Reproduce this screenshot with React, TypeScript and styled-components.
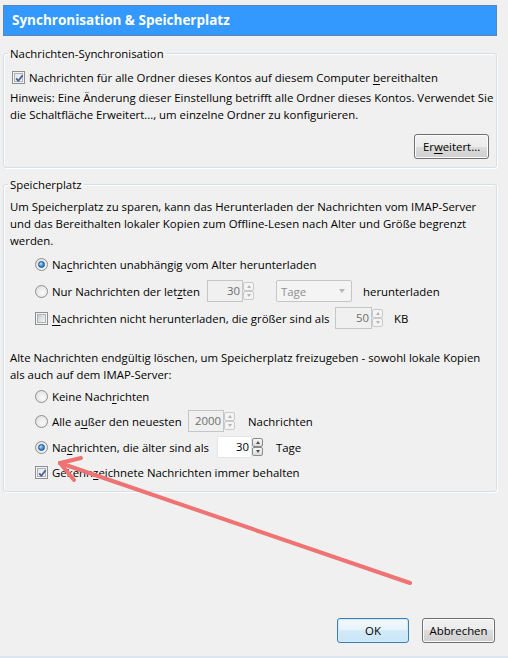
import styled, { createGlobalStyle } from "styled-components";

const GlobalStyle = createGlobalStyle`
  html, body {
    margin: 0;
    padding: 0;
    background: #f0f0f0;
  }
  body {
    font-family: "Open Sans", "Noto Sans", sans-serif;
    font-size: 11.4px;
    color: #000;
  }
`;

const Window = styled.div`
  position: relative;
  width: 508px;
  height: 658px;
  box-sizing: border-box;
  padding: 5px 11px 0 3px;
  border-bottom: 2px solid #dce6f1;
  display: flex;
  flex-direction: column;
`;

const TitleBar = styled.div`
  height: 31px;
  box-sizing: border-box;
  background: #3399ff;
  border: 1px solid #5b86b3;
  color: #fff;
  font-weight: 700;
  font-size: 13.5px;
  line-height: 29px;
  padding-left: 8px;
`;

const Group = styled.fieldset<{ $gap: number }>`
  margin: ${(p) => p.$gap}px 0 0;
  padding: 0 7px 8px 6px;
  border: 1px solid #d5dfe5;
  border-radius: 3px;
  box-shadow: inset 1px 1px 0 #fff, 1px 1px 0 #fff;
  min-width: 0;
`;

const Legend = styled.legend`
  padding: 0 2px;
  margin-left: -2px;
  line-height: 17px;
`;

const Row = styled.div<{ $top: number; $indent?: number }>`
  display: flex;
  align-items: center;
  height: 22px;
  margin-top: ${(p) => p.$top}px;
  padding-left: ${(p) => p.$indent ?? 0}px;
  white-space: nowrap;
`;

const Para = styled.p<{ $top: number }>`
  margin: ${(p) => p.$top}px 0 0;
  line-height: 17px;
  white-space: nowrap;
`;

const Option = styled.label<{ $w?: number }>`
  display: flex;
  align-items: center;
  gap: 4px;
  width: ${(p) => (p.$w ? `${p.$w}px` : "auto")};
  flex: none;
`;

const CheckBox = styled.span<{ $checked?: boolean }>`
  position: relative;
  width: 13px;
  height: 13px;
  box-sizing: border-box;
  border: 1px solid #8e8f8f;
  background: #f4f4f4;
  flex: none;

  &::before {
    content: "";
    position: absolute;
    inset: 1px;
    border: 1px solid #aeb3b9;
    background: ${(p) =>
      p.$checked
        ? "linear-gradient(135deg, #dfe3ea, #fbfbfb)"
        : "linear-gradient(135deg, #c8ccd1, #f5f5f5)"};
  }

  svg {
    position: absolute;
    left: 1px;
    top: 1px;
  }
`;

const Radio = styled.span<{ $checked?: boolean }>`
  position: relative;
  width: 13px;
  height: 13px;
  box-sizing: border-box;
  border-radius: 50%;
  border: 1px solid #8e8f8f;
  background: radial-gradient(circle at 60% 60%, #fbfbfb 0%, #e4e4e4 70%, #cfcfcf 100%);
  flex: none;

  &::after {
    content: "";
    display: ${(p) => (p.$checked ? "block" : "none")};
    position: absolute;
    left: 2px;
    top: 2px;
    width: 7px;
    height: 7px;
    box-sizing: border-box;
    border-radius: 50%;
    border: 1px solid #1b4f8c;
    background: radial-gradient(circle at 35% 35%, #bfe3ff 0%, #4b9be0 45%, #1f5fa8 100%);
  }
`;

const Key = styled.span`
  text-decoration: underline;
  text-underline-offset: 2px;
`;

const Spin = styled.span<{ $left: number }>`
  display: inline-flex;
  align-items: center;
  margin-left: ${(p) => p.$left}px;
  flex: none;
`;

const NumBox = styled.span<{ $disabled?: boolean; $w: number }>`
  width: ${(p) => p.$w}px;
  height: 22px;
  box-sizing: border-box;
  border: 1px solid ${(p) => (p.$disabled ? "#c4c7ca" : "#e2e6eb")};
  background: ${(p) => (p.$disabled ? "#f0f0f0" : "#fff")};
  color: ${(p) => (p.$disabled ? "#6d6d6d" : "#000")};
  text-align: right;
  padding-right: 2px;
  line-height: 20px;
`;

const SpinButtons = styled.span`
  display: flex;
  flex-direction: column;
  width: 11px;
  height: 18px;
`;

const SpinButton = styled.span<{ $disabled?: boolean; $down?: boolean }>`
  flex: 1;
  box-sizing: border-box;
  border: 1px solid ${(p) => (p.$disabled ? "#c9c9c9" : "#8a8a8a")};
  border-radius: 2px;
  background: ${(p) =>
    p.$disabled ? "#f4f4f4" : "linear-gradient(#f6f6f6, #dcdcdc)"};
  display: flex;
  align-items: center;
  justify-content: center;

  &::after {
    content: "";
    border-left: 2.5px solid transparent;
    border-right: 2.5px solid transparent;
    ${(p) => (p.$down ? "border-top" : "border-bottom")}: 3px solid
      ${(p) => (p.$disabled ? "#b4b4b4" : "#4d4d4d")};
  }
`;

const Select = styled.span<{ $left: number }>`
  width: 76px;
  height: 22px;
  box-sizing: border-box;
  margin-left: ${(p) => p.$left}px;
  border: 1px solid #c6c6c6;
  border-radius: 2px;
  background: #f4f4f4;
  color: #8d8d8d;
  display: flex;
  align-items: center;
  justify-content: space-between;
  padding: 0 6px 0 4px;
  flex: none;

  &::after {
    content: "";
    border-left: 3.5px solid transparent;
    border-right: 3.5px solid transparent;
    border-top: 4px solid #b8b8b8;
  }
`;

const After = styled.span<{ $left: number }>`
  margin-left: ${(p) => p.$left}px;
`;

const ButtonRow = styled.div<{ $top?: number }>`
  display: flex;
  justify-content: flex-end;
  gap: 13px;
  margin-top: ${(p) => (p.$top != null ? `${p.$top}px` : "auto")};
`;

const Button = styled.button<{ $w: number; $default?: boolean }>`
  width: ${(p) => p.$w}px;
  height: 25px;
  padding: 0;
  font: inherit;
  color: #000;
  border-radius: 3px;
  border: 1px solid ${(p) => (p.$default ? "#3c7fb1" : "#707070")};
  background: ${(p) =>
    p.$default
      ? "linear-gradient(#f2f9fd 0%, #e6f3fb 50%, #d4ebf8 50%, #c9e5f6 100%)"
      : "linear-gradient(#f2f2f2 0%, #ebebeb 50%, #dddddd 50%, #cfcfcf 100%)"};
  box-shadow: inset 0 0 0 1px ${(p) => (p.$default ? "#cfeaf8" : "#fcfcfc")};
`;

const Footer = styled.div`
  margin-top: auto;
  padding: 0 2px 13px 0;
`;

const Overlay = styled.svg`
  position: absolute;
  left: 0;
  top: 0;
  pointer-events: none;
`;

function Check({ checked }: { checked?: boolean }) {
  return (
    <CheckBox $checked={checked}>
      {checked && (
        <svg width="11" height="11" viewBox="0 0 11 11">
          <path
            d="M2.2 5.4 L4.4 7.8 L8.6 2.2"
            fill="none"
            stroke="#4a5f97"
            strokeWidth="1.8"
            strokeLinejoin="round"
          />
        </svg>
      )}
    </CheckBox>
  );
}

function Spinner(props: { value: string; left: number; w?: number; disabled?: boolean }) {
  return (
    <Spin $left={props.left}>
      <NumBox $w={props.w ?? 36} $disabled={props.disabled}>
        {props.value}
      </NumBox>
      <SpinButtons>
        <SpinButton $disabled={props.disabled} />
        <SpinButton $disabled={props.disabled} $down />
      </SpinButtons>
    </Spin>
  );
}

export default function App() {
  return (
    <Window>
      <GlobalStyle />
      <TitleBar>Synchronisation &amp; Speicherplatz</TitleBar>

      <Group $gap={9}>
        <Legend>Nachrichten-Synchronisation</Legend>
        <Row $top={4} $indent={2}>
          <Option>
            <Check checked />
            <span>
              Nachrichten für alle Ordner dieses Kontos auf diesem Computer <Key>b</Key>ereithalten
            </span>
          </Option>
        </Row>
        <Para $top={1}>
          Hinweis: Eine Änderung dieser Einstellung betrifft alle Ordner dieses Kontos. Verwendet Sie
          <br />
          die Schaltfläche Erweitert..., um einzelne Ordner zu konfigurieren.
        </Para>
        <ButtonRow $top={11}>
          <Button $w={75}>
            Er<Key>w</Key>eitert...
          </Button>
        </ButtonRow>
      </Group>

      <Group $gap={8}>
        <Legend>Speicherplatz</Legend>
        <Para $top={5}>
          Um Speicherplatz zu sparen, kann das Herunterladen der Nachrichten vom IMAP-Server
          <br />
          und das Bereithalten lokaler Kopien zum Offline-Lesen nach Alter und Größe begrenzt
          <br />
          werden.
        </Para>
        <Row $top={4} $indent={25}>
          <Option>
            <Radio $checked />
            <span>
              Na<Key>c</Key>hrichten unabhängig vom Alter herunterladen
            </span>
          </Option>
        </Row>
        <Row $top={5} $indent={25}>
          <Option $w={172}>
            <Radio />
            <span>
              Nur Nachrichten der let<Key>z</Key>ten
            </span>
          </Option>
          <Spinner value="30" left={0} disabled />
          <Select $left={22}>Tage</Select>
          <After $left={11}>herunterladen</After>
        </Row>
        <Row $top={5} $indent={25}>
          <Option $w={300}>
            <Check />
            <span>
              <Key>N</Key>achrichten nicht herunterladen, die größer sind als
            </span>
          </Option>
          <Spinner value="50" left={0} w={37} disabled />
          <After $left={11}>KB</After>
        </Row>
        <Para $top={20}>
          Alte Nachrichten endgültig löschen, um Speicherplatz freizugeben - sowohl lokale Kopien
          <br />
          als auch auf dem IMAP-Server:
        </Para>
        <Row $top={2} $indent={25}>
          <Option>
            <Radio />
            <span>
              Keine Nach<Key>r</Key>ichten
            </span>
          </Option>
        </Row>
        <Row $top={3} $indent={25}>
          <Option $w={153}>
            <Radio />
            <span>
              Alle a<Key>u</Key>ßer den neuesten
            </span>
          </Option>
          <Spinner value="2000" left={0} disabled />
          <After $left={13}>Nachrichten</After>
        </Row>
        <Row $top={4} $indent={25}>
          <Option $w={182}>
            <Radio $checked />
            <span>
              Na<Key>c</Key>hrichten, die älter sind als
            </span>
          </Option>
          <Spinner value="30" left={0} w={35} />
          <After $left={13}>Tage</After>
        </Row>
        <Row $top={3} $indent={25}>
          <Option>
            <Check checked />
            <span>
              Gekenn<Key>z</Key>eichnete Nachrichten immer behalten
            </span>
          </Option>
        </Row>
      </Group>

      <Footer>
        <ButtonRow>
          <Button $w={72} $default>
            OK
          </Button>
          <Button $w={73}>Abbrechen</Button>
        </ButtonRow>
      </Footer>

      <Overlay width="508" height="658" viewBox="0 0 508 658">
        <g stroke="#ef7373" strokeWidth="4" strokeLinecap="round" fill="none">
          <line x1="410" y1="583" x2="60" y2="463" />
          <line x1="60" y1="463" x2="81" y2="458" />
          <line x1="60" y1="463" x2="74" y2="480" />
        </g>
      </Overlay>
    </Window>
  );
}
